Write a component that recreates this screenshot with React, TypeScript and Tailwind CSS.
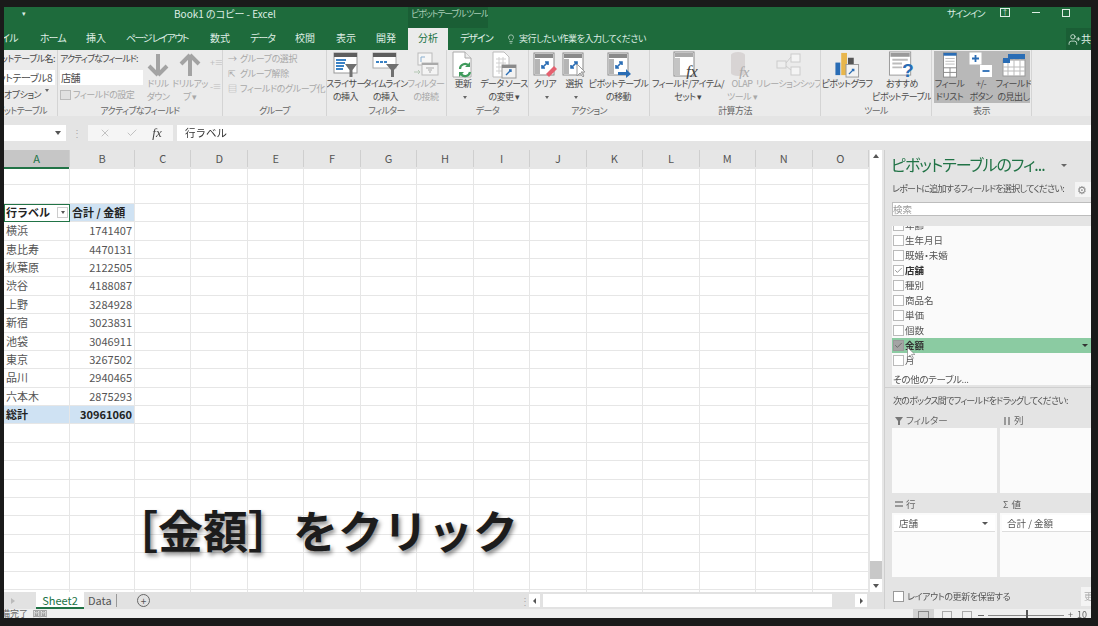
import { ReactNode } from "react";
import { Check, X, Lightbulb, UserPlus } from "lucide-react";

const columns = ["A", "B", "C", "D", "E", "F", "G", "H", "I", "J", "K", "L", "M", "N", "O"];

const pivotRows = [
  ["横浜", "1741407"],
  ["恵比寿", "4470131"],
  ["秋葉原", "2122505"],
  ["渋谷", "4188087"],
  ["上野", "3284928"],
  ["新宿", "3023831"],
  ["池袋", "3046911"],
  ["東京", "3267502"],
  ["品川", "2940465"],
  ["六本木", "2875293"],
];

const fields = [
  { name: "生年月日" },
  { name: "既婚・未婚" },
  { name: "店舗", checked: true, bold: true },
  { name: "種別" },
  { name: "商品名" },
  { name: "単価" },
  { name: "個数" },
  { name: "金額", checked: true, active: true, bold: true },
  { name: "月" },
];

const tabs = [
  { name: "ファイル", w: "w-[36px] tracking-[-0.7px]", clip: true },
  { name: "ホーム", w: "w-[46px] tracking-[-1px]" },
  { name: "挿入", w: "w-[40px]" },
  { name: "ページ レイアウト", w: "w-[84px] tracking-[-1.5px]" },
  { name: "数式", w: "w-[40px]" },
  { name: "データ", w: "w-[45px] tracking-[-1px]" },
  { name: "校閲", w: "w-[41px]" },
  { name: "表示", w: "w-[40px]" },
  { name: "開発", w: "w-[40px]" },
];

function Caret() {
  return <span className="inline-block align-middle ml-1 w-0 h-0 border-x-[2px] border-x-transparent border-t-[3px] border-t-[#666]" />;
}

function Group({ w, label, clip, children }: { w: string; label: string; clip?: boolean; children: ReactNode }) {
  return (
    <div className={`${w} shrink-0 flex flex-col border-r border-[#d4d4d4] overflow-hidden`}>
      <div className="h-[54px] flex">{children}</div>
      <div className={`h-[12px] text-[9px] tracking-[-0.6px] leading-[13px] text-[#666] whitespace-nowrap ${clip ? "flex justify-end pr-[10px]" : "text-center"}`}>{label}</div>
    </div>
  );
}

function RibbonBtn({ w, lines, icon, muted, caret }: { w: string; lines: string[]; icon: ReactNode; muted?: boolean; caret?: boolean }) {
  return (
    <div className={`${w} shrink-0 flex flex-col items-center`}>
      <div className="h-[27px] mt-[1px] flex items-center justify-center">{icon}</div>
      <div className={`text-[9px] tracking-[-0.5px] leading-[12.5px] text-center whitespace-nowrap ${muted ? "text-[#a8a8a8]" : "text-[#4a4a4a]"}`}>
        {lines.map((l, i) => (
          <div key={i}>{l}</div>
        ))}
        {caret && lines.length === 1 && (
          <div>
            <Caret />
          </div>
        )}
      </div>
    </div>
  );
}

function PivotSheet({ children, w = 24, h = 26, muted }: { children?: ReactNode; w?: number; h?: number; muted?: boolean }) {
  const c = muted ? "#c4c4c4" : "#8a8a8a";
  return (
    <svg width={w} height={h} viewBox="0 0 24 26">
      <rect x="1" y="1" width="20" height="22" fill="#fff" stroke={c} />
      <rect x="2" y="2" width="18" height="4" fill={c} />
      <rect x="2" y="7" width="5" height="15" fill={muted ? "#ddd" : "#b5b5b5"} />
      {children}
    </svg>
  );
}

function ActionArrows() {
  return <path d="M9 16l6-6m-3 0h3v3M9 13v3h3" fill="none" stroke="#2a6db5" strokeWidth="1.6" />;
}

function SlicerIcon() {
  return (
    <svg width="26" height="26" viewBox="0 0 26 26">
      <rect x="1" y="1" width="23" height="20" fill="#fff" stroke="#999" />
      <rect x="1" y="1" width="23" height="4" fill="#5e5e5e" />
      <path d="M3 8h10M3 11h9M3 14h8M3 17h7" stroke="#3b82c4" strokeWidth="2" />
      <path d="M12 12h12l-4.5 6v7h-3v-7z" fill="#707070" />
    </svg>
  );
}

function TimelineIcon() {
  return (
    <svg width="28" height="26" viewBox="0 0 28 26">
      <rect x="1" y="1" width="23" height="15" fill="#fff" stroke="#aaa" />
      <rect x="1" y="1" width="23" height="4" fill="#5e5e5e" />
      <path d="M4 10h12" stroke="#3b82c4" strokeWidth="2" strokeDasharray="3 1" />
      <path d="M14 12h13l-5 6v7h-3v-7z" fill="#707070" />
    </svg>
  );
}

function FilterLinkIcon() {
  return (
    <svg width="26" height="26" viewBox="0 0 26 26">
      <rect x="5" y="1" width="14" height="12" fill="#f6f6f6" stroke="#bbb" />
      <path d="M8 5v5m0-5h4" stroke="#8bb0d0" />
      <rect x="9" y="11" width="16" height="12" fill="#f4f4f4" stroke="#bbb" />
      <rect x="9" y="11" width="16" height="2" fill="#aaa" />
      <path d="M13 16h8M15 18h4M16 20h2" stroke="#aaa" />
      <path d="M1 20h6m-2-2l2 2-2 2" fill="none" stroke="#b5c8b5" />
    </svg>
  );
}

function RefreshIcon() {
  return (
    <svg width="24" height="28" viewBox="0 0 24 28">
      <path d="M2 1h12l6 6v19H2z" fill="#fff" stroke="#aaa" />
      <path d="M14 1v6h6" fill="#eee" stroke="#aaa" />
      <path d="M9 18a5 5 0 0 1 9-3m1 6a5 5 0 0 1-9 2" fill="none" stroke="#3f9a5c" strokeWidth="2.2" />
      <path d="M19 11v5h-5zM8 26v-5h5z" fill="#3f9a5c" />
    </svg>
  );
}

function DataSourceIcon() {
  return (
    <svg width="26" height="28" viewBox="0 0 26 28">
      <path d="M2 1h11l5 5v20H2z" fill="#fff" stroke="#bbb" />
      <path d="M5 8h10M5 12h10M5 16h10M5 20h10M8 6v17M12 6v17" stroke="#d0d0d0" />
      <rect x="11" y="14" width="14" height="13" fill="#f2f2f2" stroke="#999" />
      <rect x="11" y="14" width="14" height="3" fill="#8a8a8a" />
      <path d="M15 24l5-5m-2 0h2v2" fill="none" stroke="#2a6db5" strokeWidth="1.4" />
    </svg>
  );
}

function FxIcon() {
  return (
    <svg width="30" height="28" viewBox="0 0 30 28">
      <rect x="1" y="1" width="20" height="24" fill="#fff" stroke="#8a8a8a" />
      <rect x="2" y="2" width="18" height="4" fill="#aaa" />
      <rect x="2" y="7" width="5" height="17" fill="#c4c4c4" />
      <text x="13" y="26" fontFamily="Liberation Serif" fontStyle="italic" fontSize="17" fill="#444">fx</text>
    </svg>
  );
}

function OlapIcon() {
  return (
    <svg width="26" height="28" viewBox="0 0 26 28">
      <path d="M2 4a7 3 0 0 1 14 0v18a7 3 0 0 1-14 0z" fill="#d8d4d4" />
      <text x="10" y="26" fontFamily="Liberation Serif" fontStyle="italic" fontSize="15" fill="#aaa">fx</text>
    </svg>
  );
}

function RelationIcon() {
  return (
    <svg width="26" height="24" viewBox="0 0 26 24">
      <rect x="1" y="8" width="9" height="7" fill="#eee" stroke="#ccc" />
      <rect x="15" y="1" width="9" height="8" fill="#f4f4f4" stroke="#ccc" />
      <rect x="15" y="14" width="9" height="8" fill="#f4f4f4" stroke="#ccc" />
      <path d="M10 10l5-6M10 13l5 4" stroke="#ccc" />
    </svg>
  );
}

function PivotChartIcon() {
  return (
    <svg width="28" height="27" viewBox="0 0 28 28">
      <rect x="2" y="12" width="5" height="13" fill="#2a6db5" />
      <rect x="8" y="2" width="6" height="23" fill="#e8b64c" />
      <rect x="15" y="7" width="6" height="8" fill="#555" />
      <rect x="13" y="14" width="13" height="13" fill="#f2f2f2" stroke="#999" />
      <path d="M16 24l5-5m-2 0h2v2" fill="none" stroke="#2a6db5" strokeWidth="1.4" />
    </svg>
  );
}

function RecommendIcon() {
  return (
    <svg width="28" height="27" viewBox="0 0 28 28">
      <rect x="1" y="1" width="22" height="24" fill="#fff" stroke="#999" />
      <rect x="2" y="2" width="20" height="4" fill="#9a9a9a" />
      <path d="M4 9h16M4 13h10M4 17h10" stroke="#bcbcbc" strokeWidth="2" />
      <text x="14" y="27" fontFamily="Liberation Sans" fontWeight="700" fontSize="20" fill="#2a6db5">?</text>
    </svg>
  );
}

function FieldListIcon() {
  return (
    <svg width="16" height="26" viewBox="0 0 16 28">
      <rect x="1" y="1" width="14" height="26" fill="#fff" stroke="#888" />
      <rect x="1" y="1" width="14" height="3" fill="#2a6db5" />
      <path d="M3 7h10M3 10h10M3 13h10" stroke="#bbb" />
      <path d="M1 17h14M1 22h14M8 17v10" stroke="#888" />
    </svg>
  );
}

function PlusMinusIcon() {
  return (
    <svg width="24" height="26" viewBox="0 0 24 26">
      <rect x="0.5" y="0.5" width="12" height="12" fill="#fff" />
      <path d="M3 6.5h7M6.5 3v7" stroke="#2a6db5" strokeWidth="1.8" />
      <rect x="11" y="13" width="12" height="12" fill="#fff" />
      <path d="M13.5 19h7" stroke="#2a6db5" strokeWidth="1.8" />
    </svg>
  );
}

function HeadersIcon() {
  return (
    <svg width="24" height="24" viewBox="0 0 24 24">
      <rect x="1" y="7" width="22" height="16" fill="#fff" stroke="#999" />
      <rect x="6" y="1" width="17" height="5" fill="#2a6db5" />
      <rect x="1" y="5" width="7" height="5" fill="#2a6db5" />
      <path d="M6 10v13M12 6v17M18 6v17M1 14h22M1 18h22" stroke="#bbb" />
    </svg>
  );
}

function BigArrow({ up }: { up?: boolean }) {
  return (
    <svg width="22" height="24" viewBox="0 0 22 24">
      <path d={up ? "M11 2L20 11M11 2L2 11M11 2v21" : "M11 22L20 13M11 22L2 13M11 22V1"} fill="none" stroke="#a3a3a3" strokeWidth="4" />
    </svg>
  );
}

function Ribbon() {
  return (
    <div className="h-[66px] shrink-0 flex bg-[#ebebeb] text-[9px] tracking-[-0.5px] leading-[12px]">
      <Group w="w-[54px]" label="ピボットテーブル" clip>
        <div className="w-full flex flex-col pt-[3px] text-[#4a4a4a]">
          <div className="h-[14px] flex justify-end overflow-hidden whitespace-nowrap pr-[2px]">ピボットテーブル名:</div>
          <div className="h-[15px] mt-[3px] mr-[2px] bg-white flex justify-end overflow-hidden whitespace-nowrap text-[10px] leading-[15px] pr-[3px]">ピボットテーブル8</div>
          <div className="h-[14px] mt-[4px] flex justify-end overflow-hidden whitespace-nowrap pr-[8px]">オプション<Caret /></div>
        </div>
      </Group>
      <Group w="w-[165px]" label="アクティブなフィールド">
        <div className="w-[83px] ml-[2px] shrink-0 flex flex-col pt-[3px] text-[#4a4a4a]">
          <div className="h-[14px] whitespace-nowrap tracking-[-0.9px]">アクティブなフィールド:</div>
          <div className="h-[15px] mt-[3px] bg-white text-[10px] leading-[15px] pl-[1px]">店舗</div>
          <div className="mt-[4px] flex items-center gap-[2px] text-[#a8a8a8] whitespace-nowrap">
            <span className="w-[11px] h-[10px] border border-[#bbb] bg-[#e0e0e0]" />
            フィールドの設定
          </div>
        </div>
        <RibbonBtn w="w-[30px]" lines={["ドリル", "ダウン"]} icon={<BigArrow />} muted />
        <RibbonBtn w="w-[34px]" lines={["ドリルアッ", "プ ▾"]} icon={<BigArrow up />} muted />
        <div className="w-[12px] ml-[3px] flex flex-col justify-between pt-[8px] pb-[13px] text-[#bdbdbd] text-[9px] leading-[9px]">
          <span>+≡</span>
          <span>-≡</span>
        </div>
      </Group>
      <Group w="w-[104px]" label="グループ">
        <div className="flex flex-col pl-[5px] pt-[3px] gap-[3px] text-[#a8a8a8] whitespace-nowrap tracking-[-0.4px]">
          <div className="flex">
            <span className="w-[12px]">→</span>グループの選択
          </div>
          <div className="flex">
            <span className="w-[12px]">⇱</span>グループ解除
          </div>
          <div className="flex">
            <span className="w-[12px]">▤</span>フィールドのグループ化
          </div>
        </div>
      </Group>
      <Group w="w-[120px]" label="フィルター">
        <RibbonBtn w="w-[37px]" lines={["スライサー", "の挿入"]} icon={<SlicerIcon />} />
        <RibbonBtn w="w-[43px]" lines={["タイムライン", "の挿入"]} icon={<TimelineIcon />} />
        <RibbonBtn w="w-[38px]" lines={["フィルター", "の接続"]} icon={<FilterLinkIcon />} muted />
      </Group>
      <Group w="w-[82px]" label="データ">
        <RibbonBtn w="w-[32px]" lines={["更新"]} icon={<RefreshIcon />} caret />
        <RibbonBtn w="w-[50px]" lines={["データ ソース", "の変更 ▾"]} icon={<DataSourceIcon />} />
      </Group>
      <Group w="w-[121px]" label="アクション">
        <RibbonBtn
          w="w-[32px]"
          lines={["クリア"]}
          caret
          icon={
            <PivotSheet>
              <ActionArrows />
              <path d="M13 22l8-8 3 3-8 8z" fill="#e5606f" />
            </PivotSheet>
          }
        />
        <RibbonBtn
          w="w-[26px]"
          lines={["選択"]}
          caret
          icon={
            <PivotSheet>
              <ActionArrows />
              <path d="M15 12v12l3-3 3 4 1-1-3-4h4z" fill="#fff" stroke="#999" />
            </PivotSheet>
          }
        />
        <RibbonBtn
          w="w-[63px]"
          lines={["ピボットテーブル", "の移動"]}
          icon={
            <PivotSheet>
              <ActionArrows />
              <path d="M11 20h8v-3l5 5-5 4v-3h-8z" fill="#2a6db5" />
            </PivotSheet>
          }
        />
      </Group>
      <Group w="w-[171px]" label="計算方法">
        <RibbonBtn w="w-[76px]" lines={["フィールド/アイテム/", "セット ▾"]} icon={<FxIcon />} />
        <RibbonBtn w="w-[32px]" lines={["OLAP", "ツール ▾"]} icon={<OlapIcon />} muted />
        <RibbonBtn w="w-[62px]" lines={["リレーションシップ"]} icon={<RelationIcon />} muted />
      </Group>
      <Group w="w-[111px]" label="ツール">
        <RibbonBtn w="w-[52px]" lines={["ピボットグラフ"]} icon={<PivotChartIcon />} />
        <RibbonBtn w="w-[58px]" lines={["おすすめ", "ピボットテーブル"]} icon={<RecommendIcon />} />
      </Group>
      <Group w="w-[100px]" label="表示">
        <div className="ml-[2px] mt-[1px] h-[52px] w-[96px] flex bg-[#b8b8b8]">
          <RibbonBtn w="w-[31px]" lines={["フィール", "ドリスト"]} icon={<FieldListIcon />} />
          <RibbonBtn w="w-[32px]" lines={["+/-", "ボタン"]} icon={<PlusMinusIcon />} />
          <RibbonBtn w="w-[33px]" lines={["フィールド", "の見出し"]} icon={<HeadersIcon />} />
        </div>
      </Group>
    </div>
  );
}

function FormulaBar() {
  return (
    <div className="h-[34px] shrink-0 flex bg-[#e4e4e4] pt-[9px] pb-[9px] text-[#555]">
      <div className="w-[62px] bg-white flex items-center justify-end pr-[5px]">
        <span className="w-0 h-0 border-x-[3px] border-x-transparent border-t-[4px] border-t-[#555]" />
      </div>
      <div className="w-[22px] text-center text-[10px] leading-[16px] text-[#aaa]">⋮</div>
      <div className="w-[85px] bg-[#f5f5f5] flex items-center justify-around px-[4px] text-[#b0b0b0]">
        <X size={12} strokeWidth={1.5} />
        <Check size={12} strokeWidth={1.5} />
        <span className="font-['Liberation_Serif',serif] italic text-[13px] leading-[16px] text-[#444]">fx</span>
      </div>
      <div className="ml-[4px] flex-1 bg-white pl-[8px] text-[10.5px] leading-[16px] text-[#333] [font-feature-settings:normal]">行ラベル</div>
    </div>
  );
}

function Sheet() {
  const rowIndexes = Array.from({ length: 24 }, (_, i) => i);
  return (
    <div className="relative w-[865px] shrink-0 overflow-hidden bg-white [font-feature-settings:normal]">
      <div className="grid grid-cols-[66px_65px_repeat(13,1fr)] h-[17px]">
        {columns.map((c, i) => (
          <div
            key={c}
            className={`text-center text-[11px] leading-[17px] border-r border-[#cfcfcf] ${
              i === 0 ? "bg-[#c6c6c6] text-[#217346] border-b-2 border-b-[#217346]" : "bg-[#e6e6e6] text-[#555]"
            }`}
          >
            {c}
          </div>
        ))}
      </div>
      {rowIndexes.map((r) => {
        const data = r >= 3 && r <= 12 ? pivotRows[r - 3] : null;
        const isHead = r === 2;
        const isTotal = r === 13;
        return (
          <div key={r} className="grid grid-cols-[66px_65px_repeat(13,1fr)] h-[18.4px] text-[11px] leading-[17px] text-[#555]">
            {columns.map((c, i) => {
              let content: ReactNode = null;
              let cls = "";
              if (i === 0 && isHead) {
                content = (
                  <div className="flex items-center justify-between pl-[2px] pr-[1px] font-bold text-[#222]">
                    行ラベル
                    <span className="w-[11px] h-[11px] bg-white border border-[#ccc] flex items-center justify-center">
                      <span className="w-0 h-0 border-x-[2px] border-x-transparent border-t-[3px] border-t-[#555]" />
                    </span>
                  </div>
                );
                cls = "bg-white outline outline-[1.5px] -outline-offset-1 outline-[#217346]";
              } else if (i === 1 && isHead) {
                content = <div className="font-bold text-[#222] whitespace-nowrap pl-[2px]">合計 / 金額</div>;
                cls = "bg-[#cfe2f3]";
              } else if (i === 0 && isTotal) {
                content = <div className="font-bold text-[#222] pl-[2px]">総計</div>;
                cls = "bg-[#cfe2f3]";
              } else if (i === 1 && isTotal) {
                content = <div className="font-bold text-[#222] text-right pr-[2px]">30961060</div>;
                cls = "bg-[#cfe2f3]";
              } else if (data && i === 0) {
                content = <div className="pl-[2px]">{data[0]}</div>;
              } else if (data && i === 1) {
                content = <div className="text-right pr-[2px]">{data[1]}</div>;
              }
              return (
                <div key={c} className={`border-r border-b border-[#e6e6e6] ${cls}`}>
                  {content}
                </div>
              );
            })}
          </div>
        );
      })}
      <div className="absolute left-[109px] top-[352px] text-[45px] leading-[56px] font-bold text-[#1c1c1c] whitespace-nowrap [text-shadow:2px_3px_4px_rgba(0,0,0,0.45)]">
        ［金額］をクリック
      </div>
    </div>
  );
}

function VScroll() {
  return (
    <div className="w-[15px] shrink-0 pl-[1px] pr-[2px] bg-[#e6e6e6] flex flex-col">
      <div className="h-[13px] bg-white flex items-center justify-center">
        <span className="w-0 h-0 border-x-[3px] border-x-transparent border-b-[4px] border-b-[#555]" />
      </div>
      <div className="h-[399px] bg-white" />
      <div className="h-[18px] bg-[#c8c8c8]" />
      <div className="h-[13px] bg-white flex items-center justify-center">
        <span className="w-0 h-0 border-x-[3px] border-x-transparent border-t-[4px] border-t-[#555]" />
      </div>
    </div>
  );
}

function SheetBar() {
  return (
    <div className="h-[17px] shrink-0 flex items-center bg-[#e2e2e2] text-[11px] leading-[17px]">
      <span className="ml-[7px] w-0 h-0 border-y-[3px] border-y-transparent border-l-[4px] border-l-[#bbb]" />
      <div className="ml-[21px] w-[48px] h-full bg-white text-center text-[#217346] border-b-2 border-[#217346]">Sheet2</div>
      <div className="ml-[2px] pl-[2px] w-[31px] text-[#555] border-r border-[#999] leading-[13px]">Data</div>
      <span className="ml-[20px] w-[13px] h-[13px] rounded-full border border-[#666] flex items-center justify-center text-[10px] leading-[10px] text-[#555]">+</span>
      <span className="ml-[370px] w-[6px] text-[#aaa] text-[10px]">⋮</span>
      <div className="ml-[3px] w-[11px] h-[13px] bg-white flex items-center justify-center">
        <span className="w-0 h-0 border-y-[3px] border-y-transparent border-r-[3px] border-r-[#555]" />
      </div>
      <div className="ml-[3px] w-[289px] h-[13px] bg-white" />
      <div className="ml-[23px] w-[12px] h-[13px] bg-white flex items-center justify-center">
        <span className="w-0 h-0 border-y-[3px] border-y-transparent border-l-[3px] border-l-[#555]" />
      </div>
    </div>
  );
}

function AreaBox({ icon, title, head, box, children }: { icon: ReactNode; title: string; head: string; box: string; children?: ReactNode }) {
  return (
    <div className="flex flex-col">
      <div className={`${head} flex items-center gap-[3px] pl-[3px] text-[9.5px] text-[#666] whitespace-nowrap`}>
        {icon}
        {title}
      </div>
      <div className={`${box} bg-[#fbfbfb]`}>{children}</div>
    </div>
  );
}

function FieldPanel() {
  return (
    <div className="relative w-[207px] shrink-0 bg-[#e4e4e4] overflow-hidden border-l border-[#cfcfcf] text-[9.5px] text-[#555]">
      <div className="flex items-center h-[30px] pl-[6px]">
        <span className="text-[16px] tracking-[-1px] leading-[28px] -mt-[2px] text-[#217346] whitespace-nowrap">ピボットテーブルのフィ...</span>
        <span className="ml-[16px] w-0 h-0 border-x-[3px] border-x-transparent border-t-[3px] border-t-[#666]" />
      </div>
      <div className="h-[16px] mt-[1px] pl-[7px] pr-0 flex items-center whitespace-nowrap text-[9px] tracking-[-0.75px]">
        レポートに追加するフィールドを選択してください:
        <span className="ml-[11px] shrink-0 w-[20px] h-[15px] bg-[#f4f4f4] text-[#888] text-[11px] leading-[15px] pl-[2px]">⚙</span>
      </div>
      <div className="ml-[7px] mt-[5px] h-[14px] bg-white border border-[#bdbdbd] border-r-0 leading-[12px] text-[#999]">検索</div>
      <div className="ml-[7px] mt-[10px] h-[159px] bg-[#fafafa] overflow-hidden">
        <div className="h-[7px] relative overflow-hidden">
          <span className="absolute top-[-8px] left-[13px] leading-[15px]">年齢</span>
          <span className="absolute top-[-6px] left-[1px] w-[11px] h-[11px] border border-[#bbb] bg-white" />
        </div>
        {fields.map((f) => (
          <div key={f.name} className={`h-[15px] flex items-center ${f.active ? "bg-[#8bcba2]" : ""}`}>
            <span
              className={`ml-[1px] w-[11px] h-[11px] border flex items-center justify-center ${
                f.active ? "border-[#999] bg-[#a4a4a4]" : "border-[#bbb] bg-white"
              }`}
            >
              {f.checked && <Check size={9} strokeWidth={1.5} className="text-[#444]" />}
            </span>
            <span className={`ml-[1px] ${f.bold ? "font-bold text-[#333]" : ""}`}>{f.name}</span>
            {f.active && (
              <span className="ml-auto mr-[3px] w-0 h-0 border-x-[3px] border-x-transparent border-t-[3px] border-t-[#333]" />
            )}
          </div>
        ))}
        <div className="h-[15px] mt-[4px] leading-[15px] pl-[1px] tracking-[-0.3px]">その他のテーブル...</div>
      </div>
      <div className="mt-[2px] h-[1px] bg-[#cfcfcf]" />
      <div className="pl-[8px] h-[25px] leading-[25px] whitespace-nowrap text-[9px] tracking-[-0.75px]">次のボックス間でフィールドをドラッグしてください:</div>
      <div className="ml-[7px] grid grid-cols-[105px_105px] gap-x-[3px] gap-y-[2px] w-[213px]">
        <AreaBox
          title="フィルター"
          head="h-[15px]"
          box="h-[65px]"
          icon={
            <svg width="8" height="8" viewBox="0 0 8 8">
              <path d="M0 0h8L5 4v4H3V4z" fill="#777" />
            </svg>
          }
        />
        <AreaBox
          title="列"
          head="h-[15px]"
          box="h-[65px]"
          icon={
            <svg width="8" height="8" viewBox="0 0 8 8">
              <path d="M1 0h2v8H1zM5 0h2v8H5z" fill="#999" />
            </svg>
          }
        />
        <AreaBox
          title="行"
          head="h-[18px]"
          box="h-[64px]"
          icon={
            <svg width="8" height="8" viewBox="0 0 8 8">
              <path d="M0 1h8v2H0zM0 5h8v2H0z" fill="#999" />
            </svg>
          }
        >
          <div className="h-[17px] mt-[2px] mx-[2px] bg-white flex items-center justify-between pl-[5px] pr-[7px] border-b border-[#ddd]">
            店舗
            <span className="w-0 h-0 border-x-[3px] border-x-transparent border-t-[3px] border-t-[#555]" />
          </div>
        </AreaBox>
        <AreaBox title="値" head="h-[18px]" box="h-[64px]" icon={<span className="text-[9px] leading-[9px]">Σ</span>}>
          <div className="h-[17px] mt-[2px] mx-[2px] bg-white pl-[5px] leading-[17px] border-b border-[#ddd]">合計 / 金額</div>
        </AreaBox>
      </div>
      <div className="flex items-center ml-[8px] mt-[10px] h-[19px]">
        <span className="w-[11px] h-[11px] border border-[#999] bg-white shrink-0" />
        <span className="ml-[3px] w-[174px] shrink-0 whitespace-nowrap text-[9px] tracking-[-0.4px]">レイアウトの更新を保留する</span>
        <span className="shrink-0 w-[20px] h-[19px] bg-[#f4f4f4] pl-[3px] leading-[19px] text-[#aaa]">更新</span>
      </div>
      <svg className="absolute left-[22px] top-[197px]" width="9" height="13" viewBox="0 0 9 13">
        <path d="M0.5 0.5v10l2.5-2.5 2 4 1.5-.8-2-3.7h3.5z" fill="#fff" stroke="#777" strokeWidth="0.6" />
      </svg>
    </div>
  );
}

function StatusBar() {
  return (
    <div className="h-[9px] shrink-0 relative overflow-hidden bg-[#efefef] text-[9px] leading-[10px] text-[#666]">
      <div className="flex h-[9px] whitespace-nowrap">
        <div className="w-[26px] flex justify-end overflow-hidden pr-[2px]">準備完了</div>
        <span className="ml-[3px] text-[7px] leading-[8px]">圖圖</span>
        <div className="ml-auto flex items-start w-[178px]">
          <div className="w-[21px] h-[9px] bg-[#d2d2d2] flex justify-center">
            <span className="w-[11px] h-[10px] mt-[2px] border border-[#888]" />
          </div>
          <span className="ml-[8px] mt-[2px] w-[10px] h-[10px] border border-[#aaa]" />
          <span className="ml-[10px] mt-[2px] w-[10px] h-[10px] border border-[#aaa]" />
          <span className="ml-[6px] mt-[6px] w-[6px] h-[1px] bg-[#666]" />
          <span className="relative ml-[4px] mt-[6px] w-[76px] h-[1px] bg-[#888]">
            <span className="absolute left-[38px] -top-[5px] w-[2px] h-[8px] bg-[#555]" />
          </span>
          <span className="ml-[4px] mt-[1px]">+</span>
          <span className="ml-[4px] mt-[1px]">10</span>
        </div>
      </div>
    </div>
  );
}

export default function App() {
  return (
    <div className="w-[1098px] h-[626px] bg-[#1a1a1a] pt-[7px] pl-[4px] pr-[7px] pb-[8px] overflow-hidden font-['Noto_Sans_CJK_JP','Liberation_Sans',sans-serif] [font-feature-settings:'palt']">
      <div className="h-full flex flex-col overflow-hidden blur-[0.5px]">
        <div className="h-[21px] shrink-0 flex items-start bg-[#1e6b3c] text-[#dfeee5] text-[9.5px] leading-[13px]">
          <span className="ml-[18px] w-[6px] shrink-0 text-[7px]">▾</span>
          <div className="ml-[146px] w-[234px] shrink-0 whitespace-nowrap text-[10px]">Book1 のコピー - Excel</div>
          <div className="w-[80px] h-full shrink-0 bg-[#1a5e35] pl-[3px] whitespace-nowrap overflow-hidden text-[9px] tracking-[-1.2px] text-[#a9cdb6]">ピボットテーブル ツール</div>
          <span className="ml-[459px] w-[36px] shrink-0 whitespace-nowrap tracking-[-1px]">サインイン</span>
          <span className="ml-[17px] mt-[1px] w-[10px] h-[9px] shrink-0 border border-[#dfeee5] text-center text-[7px] leading-[7px]">↑</span>
          <span className="ml-[22px] mt-[5px] w-[8px] h-[1px] shrink-0 bg-[#dfeee5]" />
          <span className="ml-[22px] mt-[2px] w-[8px] h-[8px] shrink-0 border border-[#dfeee5]" />
        </div>
        <div className="h-[22px] shrink-0 flex items-stretch bg-[#1e6b3c] text-[#dfeee5] text-[10px] leading-[20px]">
          {tabs.map((t) => (
            <div key={t.name} className={`${t.w} shrink-0 whitespace-nowrap overflow-hidden flex ${t.clip ? "justify-end pr-[22px]" : ""}`}>
              {t.name}
            </div>
          ))}
          <div className="w-[40px] -ml-[8px] shrink-0 bg-[#ebebeb] text-[#217346] text-center">分析</div>
          <div className="w-[58px] pl-[12px] shrink-0 tracking-[-1px]">デザイン</div>
          <div className="flex items-center gap-[3px] text-[9px] tracking-[-0.45px] whitespace-nowrap">
            <Lightbulb size={10} strokeWidth={1.5} />
            実行したい作業を入力してください
          </div>
          <div className="ml-auto w-[25px] shrink-0 bg-[#1a5e35] pl-[2px] whitespace-nowrap overflow-hidden flex items-center">
            <UserPlus size={13} strokeWidth={1.5} className="shrink-0" />
            共有
          </div>
        </div>
        <Ribbon />
        <FormulaBar />
        <div className="flex-1 min-h-0 flex overflow-hidden">
          <div className="w-[880px] shrink-0 flex flex-col">
            <div className="flex h-[442px] overflow-hidden">
              <Sheet />
              <VScroll />
            </div>
            <SheetBar />
          </div>
          <FieldPanel />
        </div>
        <StatusBar />
      </div>
    </div>
  );
}
